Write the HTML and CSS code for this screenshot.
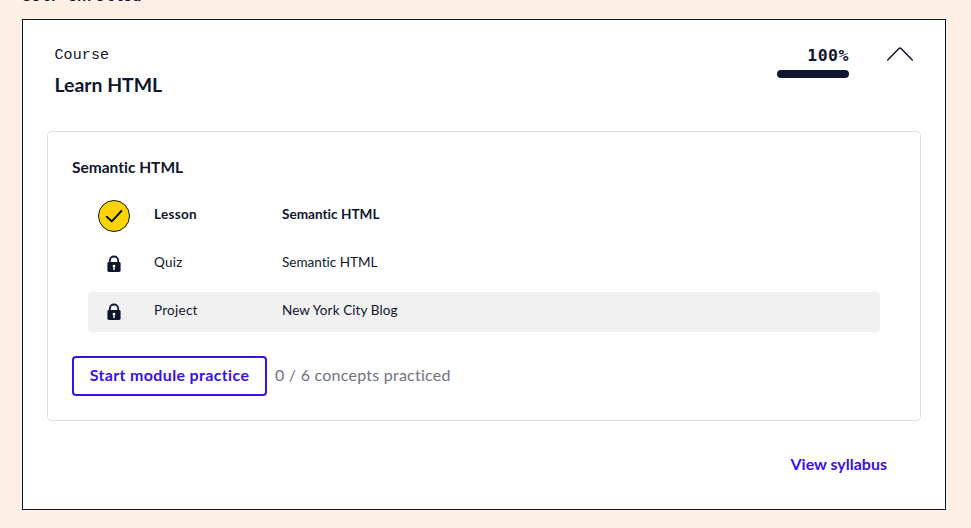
FILE: index.html
```html
<!DOCTYPE html>
<html lang="en">
<head>
<meta charset="utf-8">
<title>Learn HTML</title>
<link rel="stylesheet" href="styles.css">
</head>
<body>
<h2 class="section-title"><span>Self-enrolled</span></h2>
<main class="course">
  <header class="course-header">
    <div>
      <div class="eyebrow"><span>Course</span></div>
      <h3 class="course-title"><span>Learn HTML</span></h3>
    </div>
    <div class="header-side">
      <div class="progress">
        <div class="percent"><span>100%</span></div>
        <div class="bar"></div>
      </div>
      <svg class="chevron" width="28" height="16" viewBox="0 0 28 16" fill="none" stroke="#10162f" stroke-width="1.5"><path d="M1.7 14 13 2.5Q14 1.5 15 2.5L26.3 14" stroke-linecap="round"/></svg>
    </div>
  </header>
  <section class="module">
    <h4 class="module-title"><span>Semantic HTML</span></h4>
    <ul class="items">
      <li class="item done">
        <svg class="icon" width="32" height="32" viewBox="0 0 32 32" fill="none" stroke="#10162f"><circle cx="16" cy="16" r="15.5" fill="#ffd300"/><path d="M8.8 16.8 13.8 21.4 23.4 11" stroke="#000" stroke-width="1.9" stroke-linecap="round" stroke-linejoin="round"/></svg>
        <span class="kind">Lesson</span><span class="name">Semantic HTML</span>
      </li>
      <li class="item">
        <svg class="icon" width="32" height="32" viewBox="0 0 32 32"><path d="M11.8 15v-2.3a4.2 4.2 0 0 1 8.4 0V15" fill="none" stroke="#10162f" stroke-width="1.8"/><rect x="9.4" y="14" width="13.2" height="10" rx="1.4" fill="#10162f"/><path d="M16 16.7a1.4 1.4 0 0 0-.7 2.6V22h1.4v-2.7a1.4 1.4 0 0 0-.7-2.6Z" fill="#fff"/></svg>
        <span class="kind">Quiz</span><span class="name">Semantic HTML</span>
      </li>
      <li class="item shaded">
        <svg class="icon" width="32" height="32" viewBox="0 0 32 32"><path d="M11.8 15v-2.3a4.2 4.2 0 0 1 8.4 0V15" fill="none" stroke="#10162f" stroke-width="1.8"/><rect x="9.4" y="14" width="13.2" height="10" rx="1.4" fill="#10162f"/><path d="M16 16.7a1.4 1.4 0 0 0-.7 2.6V22h1.4v-2.7a1.4 1.4 0 0 0-.7-2.6Z" fill="#fff"/></svg>
        <span class="kind">Project</span><span class="name">New York City Blog</span>
      </li>
    </ul>
    <div class="practice">
      <button class="button" type="button"><span>Start module practice</span></button>
      <span class="count">0 / 6 concepts practiced</span>
    </div>
  </section>
  <footer class="course-footer"><a class="syllabus">View syllabus</a></footer>
</main>
</body>
</html>
```
FILE: styles.css
```css
* { box-sizing: border-box; }
html, body { height: 100%; }
body {
  margin: 0;
  overflow: hidden;
  background: #fff0e5;
  color: #10162f;
  font-family: Lato, "Liberation Sans", sans-serif;
  font-variant-ligatures: none;
}
h2, h3, h4, ul { margin: 0; padding: 0; }
.section-title {
  height: 19px;
  margin-left: 22px;
  margin-top: -23px;
  margin-bottom: 23px;
  font: 700 15.3px/40px "Liberation Mono", monospace;
}
.course {
  width: 924px;
  height: 491px;
  margin-left: 22px;
  border: 1px solid #10162f;
  background: #fff;
  padding: 0 24px;
}
.course-header {
  height: 111px;
  display: flex;
  justify-content: space-between;
  padding: 24px 7px 0;
}
.eyebrow {
  padding-top: 1px;
  padding-left: 0.5px;
  font: 15px/22px "Liberation Mono", monospace;
  letter-spacing: 0.1px;
}
.course-title { margin-top: 4px; padding-left: 0.5px; font-size: 19.4px; line-height: 28px; }
.header-side { display: flex; }
.progress { width: 72px; margin-right: 37px; }
.percent {
  font: 700 16.5px/24px "DejaVu Sans Mono", monospace;
  letter-spacing: 0.5px;
  text-align: right;
}
.bar { height: 8px; margin-top: 2px; border-radius: 4px; background: #10162f; }
.chevron { margin-top: 2px; }
.module {
  height: 290px;
  border: 1px solid #dedede;
  border-radius: 4px;
  padding: 23px 24px 0;
}
.module-title { font-size: 15.5px; line-height: 24px; }
.items {
  list-style: none;
  margin: 17px 16px 0;
  display: flex;
  flex-direction: column;
  gap: 8px;
}
.item {
  height: 40px;
  padding-left: 10px;
  display: flex;
  align-items: center;
  border-radius: 4px;
  font-size: 13.5px;
  line-height: 20px;
}
.item > span { margin-bottom: 4px; }
.icon { flex: none; margin-right: 24px; }
.kind { width: 128px; letter-spacing: 0.25px; }
.done { font-size: 13.6px; font-weight: 700; }
.shaded { background: #f1f1f1; }
.shaded .name { letter-spacing: 0.1px; }
.practice { display: flex; align-items: center; gap: 8px; margin-top: 24px; }
.button {
  width: 195px;
  height: 40px;
  padding: 0 0 2px;
  border: 2px solid #3a10e5;
  border-radius: 4px;
  background: #fff;
  color: #3a10e5;
  font: 700 16px/24px Lato, sans-serif;
  font-variant-ligatures: none;
  letter-spacing: 0.35px;
}
.count { margin-bottom: 3px; color: #707382; font-size: 16px; letter-spacing: 0.24px; }
.course-footer { padding: 31px 34px 0; text-align: right; }
.syllabus { color: #3a10e5; font-size: 16px; font-weight: 700; line-height: 24px; }
```
